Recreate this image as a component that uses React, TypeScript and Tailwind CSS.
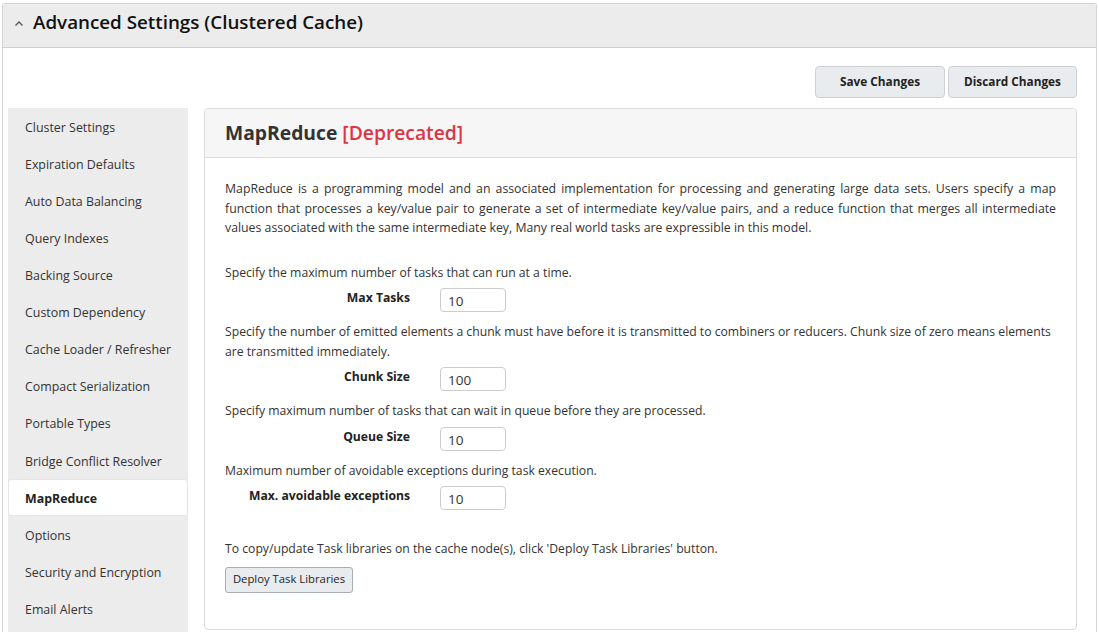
import React from 'react';

const menuItems = [
    'Cluster Settings',
    'Expiration Defaults',
    'Auto Data Balancing',
    'Query Indexes',
    'Backing Source',
    'Custom Dependency',
    'Cache Loader / Refresher',
    'Compact Serialization',
    'Portable Types',
    'Bridge Conflict Resolver',
    'MapReduce',
    'Options',
    'Security and Encryption',
    'Email Alerts',
];

const fields = [
    {
        desc: 'Specify the maximum number of tasks that can run at a time.',
        label: 'Max Tasks',
        value: '10',
    },
    {
        desc: 'Specify the number of emitted elements a chunk must have before it is transmitted to combiners or reducers. Chunk size of zero means elements are transmitted immediately.',
        label: 'Chunk Size',
        value: '100',
    },
    {
        desc: 'Specify maximum number of tasks that can wait in queue before they are processed.',
        label: 'Queue Size',
        value: '10',
    },
    {
        desc: 'Maximum number of avoidable exceptions during task execution.',
        label: 'Max. avoidable exceptions',
        value: '10',
    },
];

const Sidebar = ({ active }: { active: string }) => (
    <div className="w-[180px] shrink-0 bg-[#ececec] h-[524px]">
        {menuItems.map((item) => (
            <div
                key={item}
                className={`h-[37.1px] flex items-center pt-[3px] text-[12.4px] ${item === active
                    ? 'bg-white font-bold text-[#222] rounded-[3px] border border-[#e6e6e6] pl-[16px]'
                    : 'text-[#333] pl-[17px]'
                    }`}
            >
                {item}
            </div>
        ))}
    </div>
);

const FieldGroup = ({ desc, label, value, first }: { desc: string, label: string, value: string, first: boolean }) => (
    <div className={first ? 'mt-[25px]' : 'mt-[10px]'}>
        <p className="text-[12.2px] leading-[19.5px] text-[#333]">{desc}</p>
        <div className="flex items-center mt-[6px]">
            <label className="w-[185px] text-right font-bold text-[12.2px] text-[#222] -mt-[3px]">{label}</label>
            <input
                readOnly
                value={value}
                className="ml-[30px] w-[66px] h-[24px] border border-[#ccc] rounded-[4px] pl-[7px] pt-[2px] text-[13.5px] text-[#333] outline-none"
            />
        </div>
    </div>
);

const App = () => {
    return (
        <div className="w-[1099px] h-[632px] overflow-hidden bg-white pt-[3px] pl-[2px] pr-[2px]" style={{ fontFamily: '"Open Sans", "Noto Sans", sans-serif' }}>
            <div className="border border-[#d4d4d4] border-b-0 rounded-t-[3px] h-[640px]">
                {/* panel header */}
                <div className="h-[44px] bg-[#ececec] border-b border-[#d0d0d0] flex items-center pl-[10px]">
                    <svg width="12" height="12" viewBox="0 0 12 12" className="text-[#555] -mt-[4px]">
                        <path d="M2.5 7.5 L6 4 L9.5 7.5" fill="none" stroke="currentColor" strokeWidth="1.3" />
                    </svg>
                    <h1 className="ml-[8px] text-[18.8px] font-semibold text-[#111] -mt-[7px]">Advanced Settings (Clustered Cache)</h1>
                </div>

                <div className="pl-[5px] pr-[19px]">
                    {/* actions */}
                    <div className="flex justify-end gap-[3px] pt-[18px]">
                        <button className="w-[130px] h-[32px] bg-[#e9ecef] border border-[#cdd1d5] rounded-[4px] text-[11.8px] font-bold text-[#222]">Save Changes</button>
                        <button className="w-[129px] h-[32px] bg-[#e9ecef] border border-[#cdd1d5] rounded-[4px] text-[11.8px] font-bold text-[#222]">Discard Changes</button>
                    </div>

                    <div className="flex gap-[16px] mt-[10px]">
                        <Sidebar active="MapReduce" />

                        <div className="flex-1 border border-[#dcdcdc] rounded-[4px] h-[522px]">
                            <div className="h-[49px] bg-[#f6f6f6] border-b border-[#dcdcdc] flex items-center px-[20px] rounded-t-[4px]">
                                <h2 className="text-[19.3px] font-bold text-[#333]">
                                    MapReduce <span className="text-[#dc3545] font-semibold">[Deprecated]</span>
                                </h2>
                            </div>

                            <div className="px-[20px] pt-[21px]">
                                <p className="text-[12.3px] leading-[19.5px] text-[#333] text-justify">
                                    MapReduce is a programming model and an associated implementation for processing and generating large data sets. Users specify a map function that processes a key/value pair to generate a set of intermediate key/value pairs, and a reduce function that merges all intermediate values associated with the same intermediate key, Many real world tasks are expressible in this model.
                                </p>

                                {fields.map((f, i) => (
                                    <FieldGroup key={f.label} {...f} first={i === 0} />
                                ))}

                                <p className="mt-[29px] text-[12.2px] leading-[19.5px] text-[#333]">
                                    To copy/update Task libraries on the cache node(s), click 'Deploy Task Libraries' button.
                                </p>
                                <button className="mt-[8px] h-[26px] w-[128px] bg-[#e9ecef] border border-[#a9aeb3] rounded-[3px] text-[11.3px] text-[#222]">
                                    Deploy Task Libraries
                                </button>
                            </div>
                        </div>
                    </div>
                </div>
            </div>
        </div>
    );
};

export default App;
